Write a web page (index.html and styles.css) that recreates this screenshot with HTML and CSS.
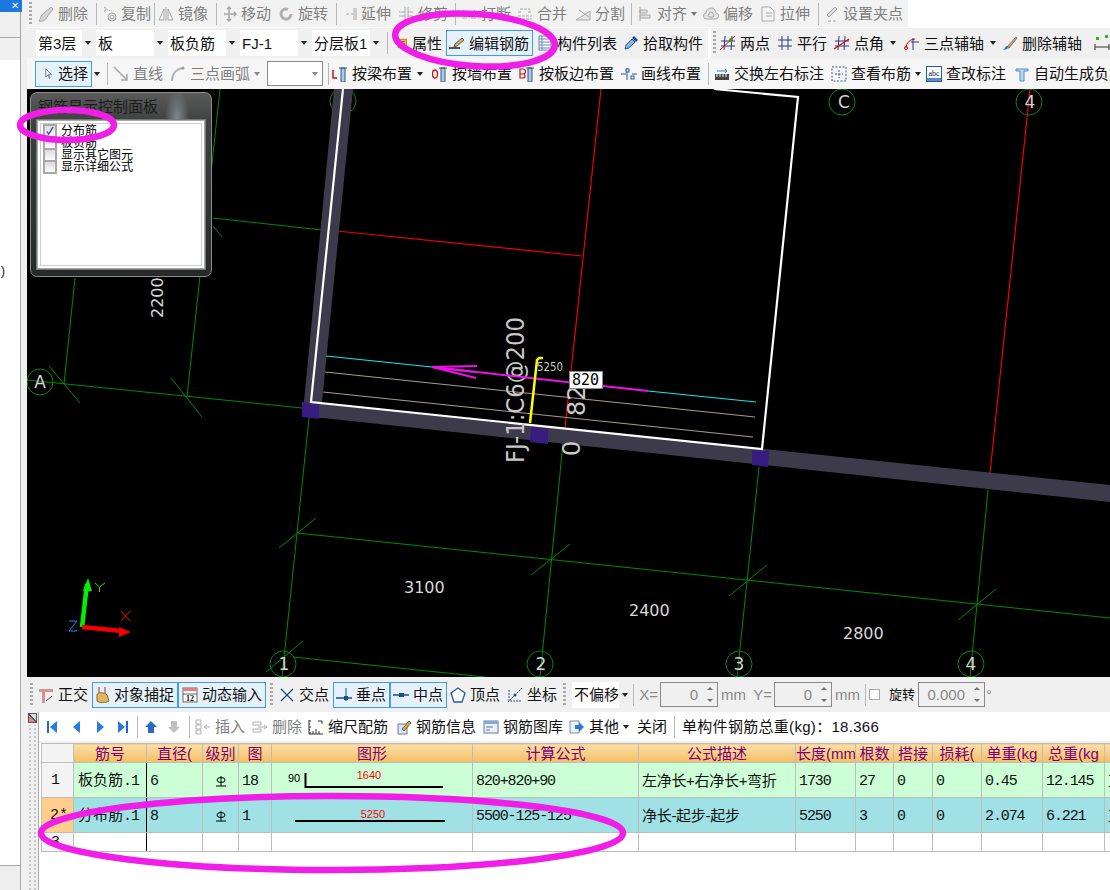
FILE: index.html
```html
<!DOCTYPE html>
<html lang="zh">
<head>
<meta charset="utf-8">
<title>钢筋编辑</title>
<link rel="stylesheet" href="styles.css">
</head>
<body>
<svg class="sprite" xmlns="http://www.w3.org/2000/svg">
<defs>
<symbol id="i-del" viewBox="0 0 16 16"><path d="M1 15c4 1 7-1 8-4l6-8-2-2-7 6c-3 1-3 5-5 8z" fill="#d4d4d4" stroke="#a8a8a8"/></symbol>
<symbol id="i-copy" viewBox="0 0 16 16"><g fill="none" stroke="#a8a8a8"><circle cx="3" cy="3" r="2"/><circle cx="11" cy="11" r="4"/><circle cx="11" cy="11" r="2"/><path d="M6 4l5 1" stroke-dasharray="1 1"/></g></symbol>
<symbol id="i-mirror" viewBox="0 0 16 16"><g fill="none" stroke="#a8a8a8"><path d="M1 14L6 3v11zM15 14L10 3v11zM8 1v14"/></g></symbol>
<symbol id="i-move" viewBox="0 0 16 16"><path d="M8 1v14M1 8h14M6 3l2-2 2 2M6 13l2 2 2-2M3 6L1 8l2 2M13 6l2 2-2 2" fill="none" stroke="#a8a8a8" stroke-width="1.5"/></symbol>
<symbol id="i-rot" viewBox="0 0 16 16"><path d="M13 8a5 5 0 1 1-3-4.600" fill="none" stroke="#b0b0b0" stroke-width="3"/></symbol>
<symbol id="i-ext" viewBox="0 0 16 16"><path d="M0 8h3M5 8h3M10 8h2M13 2v12M15 2v12M0 6v4" fill="none" stroke="#a8a8a8"/></symbol>
<symbol id="i-trim" viewBox="0 0 16 16"><path d="M1 6h6M1 10h6M10 6h5M10 10h5M7 1v14M10 1v14" fill="none" stroke="#a8a8a8"/></symbol>
<symbol id="i-brk" viewBox="0 0 16 16"><path d="M1 6h5M3 4L1 6l2 2M15 6h-5M13 4l2 2-2 2M1 12h5M10 12h5" fill="none" stroke="#a8a8a8"/></symbol>
<symbol id="i-merge" viewBox="0 0 16 16"><path d="M3 3h10M1 6h4M11 6h4M1 10h14M1 13h14" fill="none" stroke="#a8a8a8" stroke-dasharray="3 1"/></symbol>
<symbol id="i-split" viewBox="0 0 16 16"><path d="M1 14h14V5zM4 4l10 7" fill="#e4e4e4" stroke="#a8a8a8"/></symbol>
<symbol id="i-align" viewBox="0 0 16 16"><path d="M3 1v14M3 4h7v3H3zM3 9h10v3H3z" fill="#e0e0e0" stroke="#a8a8a8"/></symbol>
<symbol id="i-off" viewBox="0 0 16 16"><path d="M4 13a3 3 0 0 1-1-6 5 5 0 0 1 10 0 3 3 0 0 1-1 6zM6 11a2 2 0 0 1 0-3 2 2 0 0 1 4 0 2 2 0 0 1 0 3z" fill="#e4e4e4" stroke="#a8a8a8"/></symbol>
<symbol id="i-str" viewBox="0 0 16 16"><path d="M2 1h8l4 4v10H2zM6 7h6M6 10h6" fill="#f4f4f4" stroke="#a8a8a8"/></symbol>
<symbol id="i-set" viewBox="0 0 16 16"><path d="M6 11l8-8-2-2-8 8zM0 15h3M5 15h3M10 15h3" fill="#ddd" stroke="#a8a8a8"/></symbol>
<symbol id="i-prop" viewBox="0 0 16 16"><rect x="3" y="3" width="11" height="11" fill="#f0c040" stroke="#a07010"/><path d="M5 6h7M5 9h7" stroke="#6a4a08"/><rect x="6" y="11" width="7" height="2" fill="#4a8a3a"/></symbol>
<symbol id="i-edit" viewBox="0 0 16 16"><path d="M0 13h11" stroke="#222" stroke-width="1.500"/><path d="M5 12l1-3 7-6 2 2-7 6z" fill="#e8b060" stroke="#555"/></symbol>
<symbol id="i-list" viewBox="0 0 16 16"><path d="M2 1h12v14H2zM5 1v14M2 4h12M2 7h12M2 10h12M2 13h12" fill="#fff" stroke="#6a8ab8"/></symbol>
<symbol id="i-pick" viewBox="0 0 16 16"><path d="M2 14l1-4 6-6 3 3-6 6z" fill="#8ab4e8" stroke="#2a5a9a"/><path d="M9 3l2-2 4 4-2 2z" fill="#1a4a8a"/></symbol>
<symbol id="i-two" viewBox="0 0 16 16"><path d="M5 1L4 15M12 1l-1 14M1 6h14M1 11h14" stroke="#2a3a7a" fill="none"/><path d="M0 15L15 1" stroke="#d01010"/><circle cx="11" cy="5" r="2" fill="#4a8a2a"/></symbol>
<symbol id="i-par" viewBox="0 0 16 16"><path d="M5 1v14M11 1v14M1 5h14M1 11h14" stroke="#2a3a7a" fill="none"/></symbol>
<symbol id="i-ang" viewBox="0 0 16 16"><path d="M5 1L4 15M11 1l-1 14M1 6h14M1 11h14" stroke="#2a3a7a" fill="none"/><path d="M0 14L15 4" stroke="#d01010" stroke-width="1.300"/></symbol>
<symbol id="i-arc" viewBox="0 0 16 16"><path d="M2 13a9 9 0 0 1 9-9" stroke="#d01010" fill="none"/><path d="M9 3v12M7 7h8" stroke="#2a3a7a" fill="none"/><circle cx="2" cy="13" r="1.500" fill="none" stroke="#d01010"/></symbol>
<symbol id="i-dela" viewBox="0 0 16 16"><path d="M5 12l9-10 1 1-8 10z" fill="#e8a040" stroke="#777"/><path d="M1 15c2 0 5-1 6-3l-2-1c-2 0-2 3-4 4z" fill="#4a6ab8"/></symbol>
<symbol id="i-dim" viewBox="0 0 16 16"><rect x="2" y="2" width="3" height="3" fill="#3aa83a"/><rect x="11" y="0" width="3" height="3" fill="#3aa83a"/><path d="M1 9v6M15 9v6M1 12h14" stroke="#333" fill="none"/></symbol>
<symbol id="i-cur" viewBox="0 0 16 16"><path d="M5 1v11l3-3 2 5 1-1-2-4h4z" fill="#e8f0fa" stroke="#667"/></symbol>
<symbol id="i-line" viewBox="0 0 16 16"><path d="M1 1l13 13M14 8v6H8" fill="none" stroke="#a8a8a8" stroke-width="1.500"/></symbol>
<symbol id="i-gar" viewBox="0 0 16 16"><path d="M2 15C2 8 6 3 13 2" fill="none" stroke="#b4b4b4" stroke-width="2"/><circle cx="13" cy="2" r="1.500" fill="#999"/></symbol>
<symbol id="i-lb" viewBox="0 0 16 16"><path d="M1 4v8h4" fill="none" stroke="#c01818" stroke-width="1.500"/><path d="M7 2h8M9 2h4v14H9z" fill="#a8c8e8" stroke="#3a5a80"/></symbol>
<symbol id="i-qb" viewBox="0 0 16 16"><ellipse cx="3" cy="8" rx="2.500" ry="4" fill="none" stroke="#c01818" stroke-width="1.300"/><path d="M7 2h8M9 2h4v14H9z" fill="#a8c8e8" stroke="#3a5a80"/></symbol>
<symbol id="i-bb" viewBox="0 0 16 16"><path d="M1 3h3a2 2 0 0 1 0 5H1zM1 8h3a2 2 0 0 1 0 4H1z" fill="none" stroke="#c01818" stroke-width="1.200"/><path d="M7 2h8M9 2h4v14H9z" fill="#a8c8e8" stroke="#3a5a80"/></symbol>
<symbol id="i-dl" viewBox="0 0 16 16"><path d="M0 8h5M11 8h5M6 2v12" stroke="#2a5a9a" fill="none"/><rect x="5" y="3" width="3" height="3" fill="#fff" stroke="#2a5a9a"/><rect x="10" y="10" width="3" height="3" fill="#fff" stroke="#2a5a9a"/></symbol>
<symbol id="i-sw" viewBox="0 0 16 16"><rect x="1" y="8" width="14" height="6" fill="#444"/><path d="M3 8v3M6 8v3M9 8v3M12 8v3" stroke="#fff"/><path d="M3 5h10M11 3l2 2-2 2" fill="none" stroke="#3a7ac8"/></symbol>
<symbol id="i-view" viewBox="0 0 16 16"><path d="M1 1h14v14H1zM8 4v8M4 8h8" fill="none" stroke="#3a5a90" stroke-dasharray="2 1.500"/></symbol>
<symbol id="i-abc" viewBox="0 0 16 16"><rect x=".5" y=".5" width="15" height="15" fill="#fff" stroke="#2a5aa8"/><rect x="1" y="12" width="14" height="3" fill="#5a8ac8"/><text x="8" y="10" class="i-abc-t">abc</text></symbol>
<symbol id="i-t" viewBox="0 0 16 16"><path d="M2 3h12v2h-4v10H6V5H2z" fill="#b4d8f4" stroke="#5a8ab8"/></symbol>
<symbol id="i-ortho" viewBox="0 0 16 16"><path d="M1 2h14v3H1zM4 5h3v11H4z" fill="#d89090"/><path d="M8 14l6-5" stroke="#555"/></symbol>
<symbol id="i-snap" viewBox="0 0 16 16"><path d="M3 8c0-3 8-3 10 0l2 6c-3 2-10 2-12 0z" fill="#e0b860" stroke="#8a6a20"/><path d="M5 0v6M11 0v6" stroke="#a03030"/></symbol>
<symbol id="i-dyn" viewBox="0 0 16 16"><rect x="1" y="1" width="14" height="14" fill="#fff" stroke="#666"/><rect x="1" y="1" width="14" height="3" fill="#e08080"/><path d="M1 7h14" stroke="#666"/><text x="8" y="14" class="i-dyn-t">12</text></symbol>
<symbol id="i-cross" viewBox="0 0 16 16"><path d="M2 2l12 12M14 2L2 14" stroke="#1a4a90" stroke-width="1.300"/></symbol>
<symbol id="i-perp" viewBox="0 0 16 16"><path d="M0 11h16" stroke="#1a4a90" stroke-width="1.500"/><path d="M10 1v13" stroke="#1a4a90"/><rect x="8" y="9" width="4" height="4" fill="#1a4a90"/></symbol>
<symbol id="i-mid" viewBox="0 0 16 16"><path d="M0 8h16" stroke="#1a4a90" stroke-width="1.500"/><rect x="6" y="6" width="5" height="4" fill="#1a4a90"/></symbol>
<symbol id="i-pent" viewBox="0 0 16 16"><path d="M8 1l7 5-3 9H4L1 6z" fill="#fff" stroke="#2a5a9a" stroke-width="1.300"/></symbol>
<symbol id="i-coord" viewBox="0 0 16 16"><path d="M1 15L15 1M2 3v11h12" fill="none" stroke="#2a5a9a" stroke-dasharray="2 1"/><circle cx="8" cy="8" r="1.500" fill="#1a4a90"/></symbol>
<symbol id="i-first" viewBox="0 0 16 16"><rect x="3" y="2" width="2" height="12" fill="#1a6ad0"/><path d="M13 2v12L6 8z" fill="#2a7ae0"/></symbol>
<symbol id="i-prev" viewBox="0 0 16 16"><path d="M12 2v12L5 8z" fill="#2a7ae0"/></symbol>
<symbol id="i-next" viewBox="0 0 16 16"><path d="M5 2v12l7-6z" fill="#2a7ae0"/></symbol>
<symbol id="i-last" viewBox="0 0 16 16"><path d="M3 2v12l7-6z" fill="#2a7ae0"/><rect x="11" y="2" width="2" height="12" fill="#1a6ad0"/></symbol>
<symbol id="i-up" viewBox="0 0 16 16"><path d="M8 2l6 6h-3v6H5V8H2z" fill="#2a6ac0"/></symbol>
<symbol id="i-down" viewBox="0 0 16 16"><path d="M8 14l6-6h-3V2H5v6H2z" fill="#c0c0c0"/></symbol>
<symbol id="i-ins" viewBox="0 0 16 16"><path d="M1 1h5v4H1zM1 6h5v4H1zM1 11h5v4H1zM9 8h6M9 8l3-2M9 8l3 2" fill="none" stroke="#b0b0b0"/></symbol>
<symbol id="i-rem" viewBox="0 0 16 16"><path d="M1 3h8v3H1zM1 10h8v3H1zM6 8h9M15 8l-3-2M15 8l-3 2" fill="none" stroke="#b0b0b0"/></symbol>
<symbol id="i-scale" viewBox="0 0 16 16"><path d="M1 2h2M1 5h1M1 8h2M1 11h1M1 14h2M1 1v14M1 15h14M5 15v-3M8 15v-5M11 15v-3M14 2l-4 0M14 2v3" fill="none" stroke="#333"/></symbol>
<symbol id="i-info" viewBox="0 0 16 16"><path d="M2 5h9v10H2z" fill="#d8e4f4" stroke="#6a7a9a"/><path d="M6 10l7-8 2 2-7 8z" fill="#e8a040" stroke="#666"/></symbol>
<symbol id="i-lib" viewBox="0 0 16 16"><rect x="1" y="2" width="14" height="12" fill="#eaf0f8" stroke="#5a7aa8"/><rect x="1" y="2" width="14" height="3" fill="#8aa8d0"/><path d="M3 8h7M3 11h4" stroke="#5a7aa8"/></symbol>
<symbol id="i-oth" viewBox="0 0 16 16"><path d="M1 2h9v12H1z" fill="#eef2f8" stroke="#7a8aa8"/><path d="M6 6h4V3l5 5-5 5v-3H6z" fill="#2a7ad0"/></symbol>
</defs>
</svg>

<div class="page">
  <aside class="side">
    <div class="winclose">✕</div>
    <div class="tab"></div>
    <div class="tab tab-last"></div>
    <div class="sidelist">)</div>
    <div class="sidefoot"></div>
  </aside>

  <main class="main">
    <div class="bar1-wrap">
      <div class="bar bar1">
        <span class="grip"></span>
        <div class="tool off"><svg class="i"><use href="#i-del"/></svg>删除</div><span class="sep"></span>
        <div class="tool off"><svg class="i"><use href="#i-copy"/></svg>复制</div><span class="sep"></span>
        <div class="tool off"><svg class="i"><use href="#i-mirror"/></svg>镜像</div><span class="sep"></span>
        <div class="tool off"><svg class="i"><use href="#i-move"/></svg>移动</div>
        <div class="tool off"><svg class="i"><use href="#i-rot"/></svg>旋转</div><span class="sep"></span>
        <div class="tool off"><svg class="i"><use href="#i-ext"/></svg>延伸</div>
        <div class="tool off"><svg class="i"><use href="#i-trim"/></svg>修剪</div><span class="sep"></span>
        <div class="tool off"><svg class="i"><use href="#i-brk"/></svg>打断</div>
        <div class="tool off"><svg class="i"><use href="#i-merge"/></svg>合并</div>
        <div class="tool off"><svg class="i"><use href="#i-split"/></svg>分割</div><span class="sep"></span>
        <div class="tool off"><svg class="i"><use href="#i-align"/></svg>对齐<b class="drop drop-near"></b></div>
        <div class="tool off"><svg class="i"><use href="#i-off"/></svg>偏移</div>
        <div class="tool off"><svg class="i"><use href="#i-str"/></svg>拉伸</div><span class="sep"></span>
        <div class="tool off"><svg class="i"><use href="#i-set"/></svg>设置夹点</div>
      </div>
    </div>

    <div class="bar bar2">
      <div class="combo">第3层<b class="btn"></b></div>
      <div class="combo">板<b class="btn"></b></div>
      <div class="combo">板负筋<b class="btn"></b></div>
      <div class="combo">FJ-1<b class="btn"></b></div>
      <div class="combo">分层板1<b class="btn"></b></div>
      <span class="sep"></span>
      <div class="tool"><svg class="i i-narrow"><use href="#i-prop"/></svg>属性</div>
      <div class="tool on on-l"><svg class="i"><use href="#i-edit"/></svg>编辑钢筋</div>
      <div class="tool"><svg class="i"><use href="#i-list"/></svg>构件列表</div>
      <div class="tool"><svg class="i"><use href="#i-pick"/></svg>拾取构件</div>
      <span class="fill"></span>
      <span class="break"></span>
      <span class="grip"></span>
      <div class="tool"><svg class="i"><use href="#i-two"/></svg>两点</div>
      <div class="tool"><svg class="i"><use href="#i-par"/></svg>平行</div>
      <div class="tool"><svg class="i"><use href="#i-ang"/></svg>点角<b class="drop"></b></div>
      <div class="tool"><svg class="i"><use href="#i-arc"/></svg>三点辅轴<b class="drop"></b></div>
      <div class="tool"><svg class="i"><use href="#i-dela"/></svg>删除辅轴</div>
      <div class="tool"><svg class="i"><use href="#i-dim"/></svg></div>
    </div>

    <div class="bar bar3">
      <div class="tool on sel"><svg class="i i-narrow"><use href="#i-cur"/></svg>选择</div>
      <b class="drop drop-cell"></b>
      <span class="sep"></span>
      <div class="tool off"><svg class="i"><use href="#i-line"/></svg>直线</div>
      <div class="tool off"><svg class="i"><use href="#i-gar"/></svg>三点画弧</div>
      <b class="drop drop-cell drop-off"></b>
      <div class="combo3"><b class="drop drop-off"></b></div>
      <span class="sep"></span>
      <div class="tool"><svg class="i"><use href="#i-lb"/></svg>按梁布置</div>
      <b class="drop drop-cell"></b>
      <div class="tool"><svg class="i"><use href="#i-qb"/></svg>按墙布置</div>
      <div class="tool"><svg class="i"><use href="#i-bb"/></svg>按板边布置</div>
      <div class="tool"><svg class="i"><use href="#i-dl"/></svg>画线布置</div>
      <span class="sep"></span>
      <div class="tool"><svg class="i"><use href="#i-sw"/></svg>交换左右标注</div>
      <div class="tool"><svg class="i"><use href="#i-view"/></svg>查看布筋<b class="drop drop-near"></b></div>
      <div class="tool"><svg class="i"><use href="#i-abc"/></svg>查改标注</div>
      <div class="tool tool-start"><svg class="i"><use href="#i-t"/></svg>自动生成负筋</div>
    </div>

    <div class="canvas">
      <svg class="cad" viewBox="27 89 1083 588" xmlns="http://www.w3.org/2000/svg">
        <g class="gl">
          <line x1="220" y1="89" x2="187" y2="397"/>
          <line x1="75" y1="278" x2="64" y2="384"/>
          <line x1="27" y1="380" x2="302" y2="408"/>
          <line x1="49" y1="366" x2="80" y2="403"/>
          <line x1="171" y1="378" x2="202" y2="417"/>
          <line x1="213" y1="218" x2="322" y2="230"/>
          <line x1="213" y1="226" x2="222" y2="237"/>
          <line x1="309" y1="418" x2="282" y2="677"/>
          <line x1="563" y1="443" x2="540" y2="677"/>
          <line x1="759" y1="467" x2="737" y2="677"/>
          <line x1="988" y1="490" x2="970" y2="677"/>
          <line x1="297" y1="533" x2="1110" y2="618"/>
          <line x1="279" y1="548" x2="316" y2="518"/>
          <line x1="531" y1="575" x2="570" y2="544"/>
          <line x1="729" y1="596" x2="767" y2="565"/>
          <line x1="958" y1="620" x2="996" y2="589"/>
          <line x1="293" y1="657" x2="485" y2="677"/>
          <line x1="266" y1="672" x2="303" y2="641"/>
        </g>
        <g class="rl">
          <line x1="337" y1="231" x2="582" y2="256"/>
          <line x1="601" y1="89" x2="565" y2="428"/>
          <line x1="1030" y1="89" x2="990" y2="473"/>
        </g>
        <g class="ax">
          <circle cx="40" cy="382" r="13"/>
          <circle cx="343" cy="101" r="13"/>
          <circle cx="842" cy="102" r="13"/>
          <circle cx="1029" cy="102" r="13"/>
          <circle cx="283" cy="664" r="13"/>
          <circle cx="540" cy="664" r="13"/>
          <circle cx="739" cy="664" r="13"/>
          <circle cx="971" cy="664" r="13"/>
        </g>
        <polygon class="beam" points="334,89 353,89 322,402 304,402"/>
        <polygon class="beam" points="304,401 1110,485 1110,502 304,416"/>
        <polygon class="col" points="302,402 319,404 319,419 302,417"/>
        <polygon class="col" points="531,427 548,429 548,444 530,442"/>
        <polygon class="col" points="752,450 769,451 768,467 752,465"/>
        <polyline class="slab" points="714,89 798,97 762,449 311,402 343,89"/>
        <g class="tan">
          <line x1="325" y1="372" x2="755" y2="417"/>
          <line x1="323" y1="392" x2="753" y2="437"/>
        </g>
        <text class="t-big" transform="translate(524 463) rotate(-90)" textLength="146" lengthAdjust="spacingAndGlyphs">FJ-1:C6@200</text>
        <text class="t-big" transform="translate(585 416) rotate(-90)">82</text>
        <text class="t-big" transform="translate(580 456) rotate(-90)">0</text>
        <g class="cy">
          <line x1="326" y1="356" x2="432" y2="367"/>
          <line x1="648" y1="391" x2="756" y2="402"/>
        </g>
        <g class="mg">
          <line x1="432" y1="367" x2="648" y2="391"/>
          <line x1="432" y1="367" x2="477" y2="366"/>
          <line x1="432" y1="367" x2="476" y2="378"/>
          <line x1="432" y1="367" x2="475" y2="372"/>
        </g>
        <polyline class="yl" points="530,423 537,360 539,358 543,358"/>
        <text class="t-sm" x="537" y="371" textLength="26" lengthAdjust="spacingAndGlyphs">5250</text>
        <rect class="tipbox" x="569.500" y="371.500" width="33" height="17"/>
        <text class="t-tip" x="572" y="385">820</text>
        <text class="t-mid" transform="translate(163 318) rotate(-90)">2200</text>
        <text class="t-mid" x="404" y="593">3100</text>
        <text class="t-mid" x="629" y="616">2400</text>
        <text class="t-mid" x="843" y="639">2800</text>
        <g class="t-ax">
          <text x="40" y="388">A</text>
          <text x="844" y="108">C</text>
          <text x="1030" y="108">4</text>
          <text x="284" y="670">1</text>
          <text x="541" y="670">2</text>
          <text x="739" y="670">3</text>
          <text x="971" y="670">4</text>
        </g>
        <g class="gz">
          <path class="gz-y" d="M82 627L87 584"/>
          <path class="gz-yh" d="M88 578L92 591H83z"/>
          <path class="gz-x" d="M82 627L122 631"/>
          <path class="gz-xh" d="M131 632L119 627V637z"/>
          <circle class="gz-o" cx="82" cy="627" r="4"/>
          <path class="gz-yl" d="M95 583L99.500 587L105 583M99.500 587V592"/>
          <path class="gz-xl" d="M121 611L130 621M130 611L121 621"/>
          <path class="gz-zl" d="M69 621H77L69 631H77"/>
        </g>
      </svg>

      <section class="panel">
        <h2 class="panel-title">钢筋显示控制面板</h2>
        <div class="panel-body">
          <label class="chk"><span class="box"><svg class="tick" viewBox="0 0 11 11"><path d="M2 6l2 3 5-8"/></svg></span>分布筋</label>
          <label class="chk"><span class="box"></span>板负筋</label>
          <label class="chk"><span class="box"></span>显示其它图元</label>
          <label class="chk"><span class="box"></span>显示详细公式</label>
        </div>
      </section>
    </div>

    <div class="bar status">
      <span class="grip"></span>
      <div class="tool"><svg class="i"><use href="#i-ortho"/></svg>正交</div>
      <div class="tool on on-l"><svg class="i"><use href="#i-snap"/></svg>对象捕捉</div>
      <div class="tool on"><svg class="i"><use href="#i-dyn"/></svg>动态输入</div>
      <span class="grip grip-c"></span>
      <div class="tool"><svg class="i"><use href="#i-cross"/></svg>交点</div>
      <div class="tool on on-l"><svg class="i"><use href="#i-perp"/></svg>垂点</div>
      <div class="tool on"><svg class="i"><use href="#i-mid"/></svg>中点</div>
      <div class="tool"><svg class="i"><use href="#i-pent"/></svg>顶点</div>
      <div class="tool"><svg class="i"><use href="#i-coord"/></svg>坐标</div>
      <span class="grip grip-c"></span>
      <div class="combo combo-s">不偏移<b class="btn"></b></div>
      <span class="sep"></span>
      <span class="lbl">X=</span>
      <div class="spin"><span>0</span><i class="sp"><b></b><b class="dn"></b></i></div>
      <span class="lbl lbl-l">mm</span>
      <span class="lbl">Y=</span>
      <div class="spin"><span>0</span><i class="sp"><b></b><b class="dn"></b></i></div>
      <span class="lbl lbl-l">mm</span>
      <span class="sep"></span>
      <span class="square"></span>
      <span class="rot">旋转</span>
      <div class="spin spin-r"><span>0.000</span><i class="sp"><b></b><b class="dn"></b></i></div>
      <span class="lbl lbl-l">°</span>
    </div>

    <div class="dock">
      <div class="dock-grip"><span class="dock-x"></span></div>
      <div class="dock-main">
        <div class="bar dockbar">
          <div class="nav"><svg class="i"><use href="#i-first"/></svg></div>
          <div class="nav"><svg class="i"><use href="#i-prev"/></svg></div>
          <div class="nav"><svg class="i"><use href="#i-next"/></svg></div>
          <div class="nav"><svg class="i"><use href="#i-last"/></svg></div>
          <span class="sep"></span>
          <div class="nav"><svg class="i"><use href="#i-up"/></svg></div>
          <div class="nav"><svg class="i"><use href="#i-down"/></svg></div>
          <span class="sep"></span>
          <div class="tool off"><svg class="i"><use href="#i-ins"/></svg>插入</div>
          <div class="tool off"><svg class="i"><use href="#i-rem"/></svg>删除</div>
          <div class="tool"><svg class="i"><use href="#i-scale"/></svg>缩尺配筋</div>
          <div class="tool"><svg class="i"><use href="#i-info"/></svg>钢筋信息</div>
          <div class="tool"><svg class="i"><use href="#i-lib"/></svg>钢筋图库</div>
          <div class="tool"><svg class="i"><use href="#i-oth"/></svg>其他<b class="drop drop-near"></b></div>
          <div class="tool">关闭</div>
          <span class="sep"></span>
          <div class="total">单构件钢筋总重(kg)：18.366</div>
        </div>
        <div class="tablewrap">
          <table class="grid">
            <colgroup>
              <col class="c32"><col class="c73"><col class="c56"><col class="c36"><col class="c33"><col class="c201"><col class="c166"><col class="c157"><col class="c60"><col class="c38"><col class="c39"><col class="c49"><col class="c61"><col class="c62"><col class="c30">
            </colgroup>
            <thead>
              <tr>
                <th class="corner"></th><th>筋号</th><th>直径(</th><th>级别</th><th>图</th><th>图形</th><th>计算公式</th><th>公式描述</th><th>长度(mm</th><th>根数</th><th>搭接</th><th>损耗(</th><th>单重(kg</th><th>总重(kg</th><th></th>
              </tr>
            </thead>
            <tbody>
              <tr class="r1">
                <td class="rh">1</td>
                <td class="k">板负筋<span class="m">.1</span></td>
                <td><span class="m">6</span></td>
                <td class="gr"><svg class="grade" viewBox="0 0 10 11"><ellipse cx="5" cy="4" rx="4" ry="2.500"/><path d="M5 0v10M0 10h10"/></svg></td>
                <td><span class="m">18</span></td>
                <td class="sh"><svg class="shape" viewBox="0 0 200 34"><text class="s-b" x="16" y="19">90</text><text class="s-r" x="97" y="16" text-anchor="middle">1640</text><path class="s-l" d="M33.500 10V24H171"/></svg></td>
                <td><span class="m">820+820+90</span></td>
                <td class="d">左净长+右净长+弯折</td>
                <td><span class="m">1730</span></td>
                <td><span class="m">27</span></td>
                <td><span class="m">0</span></td>
                <td><span class="m">0</span></td>
                <td><span class="m">0.45</span></td>
                <td><span class="m">12.145</span></td>
                <td>直筋</td>
              </tr>
              <tr class="r2">
                <td class="rh">2*</td>
                <td class="k">分布筋<span class="m">.1</span></td>
                <td><span class="m">8</span></td>
                <td class="gr"><svg class="grade" viewBox="0 0 10 11"><ellipse cx="5" cy="4" rx="4" ry="2.500"/><path d="M5 0v10M0 10h10"/></svg></td>
                <td><span class="m">1</span></td>
                <td class="sh"><svg class="shape" viewBox="0 0 200 34"><text class="s-r" x="101" y="20" text-anchor="middle">5250</text><path class="s-l" d="M23 23H173"/></svg></td>
                <td><span class="m">5500-125-125</span></td>
                <td class="d">净长-起步-起步</td>
                <td><span class="m">5250</span></td>
                <td><span class="m">3</span></td>
                <td><span class="m">0</span></td>
                <td><span class="m">0</span></td>
                <td><span class="m">2.074</span></td>
                <td><span class="m">6.221</span></td>
                <td>直筋</td>
              </tr>
              <tr class="r3">
                <td class="rh">3</td><td class="k"></td><td></td><td></td><td></td><td></td><td></td><td></td><td></td><td></td><td></td><td></td><td></td><td></td><td></td>
              </tr>
            </tbody>
          </table>
        </div>
      </div>
    </div>
  </main>
</div>

<svg class="marks" viewBox="0 0 1110 890" xmlns="http://www.w3.org/2000/svg">
  <ellipse cx="475" cy="40" rx="80" ry="26" transform="rotate(4 475 40)"/>
  <ellipse cx="67" cy="125" rx="47" ry="15"/>
  <ellipse cx="332" cy="833" rx="291" ry="37"/>
</svg>
</body>
</html>
```
FILE: styles.css
```css
* { box-sizing: border-box; }
html, body { margin: 0; padding: 0; }
body {
  width: 1110px;
  height: 890px;
  overflow: hidden;
  position: relative;
  background: #fff;
  color: #111;
  font: 15px/1 "Liberation Sans", "Noto Sans CJK SC", sans-serif;
}
.sprite { position: absolute; width: 0; height: 0; }
.page { display: flex; width: 1110px; height: 890px; }

/* left strip */
.side { width: 27px; flex: none; display: flex; flex-direction: column; background: linear-gradient(90deg, #fff 0 20px, #a8a8a8 20px 21px, #f0f0f0 21px); }
.winclose { width: 22px; height: 12px; background: #1a78e0; color: #fff; font-size: 10px; line-height: 12px; text-align: right; padding-right: 3px; }
.tab { width: 21px; height: 26px; background: #f0f0f0; border-bottom: 1px solid #a8a8a8; border-right: 1px solid #a8a8a8; }
.tab-last { height: 22px; border-bottom: 0; }
.sidelist { width: 21px; flex: 1; background: #fff; border-right: 1px solid #a8a8a8; font-size: 12px; padding-top: 205px; padding-left: 1px; }
.sidefoot { width: 21px; height: 25px; background: #eee; border-top: 1px solid #a8a8a8; border-right: 1px solid #a8a8a8; }

.main { width: 1083px; flex: none; display: flex; flex-direction: column; }

/* toolbars */
.bar { display: grid; align-items: center; white-space: nowrap; overflow: hidden; }
.bar1-wrap { height: 28px; padding-bottom: 1px; }
.bar1 {
  width: 881px; height: 27px; background: #f2f2f2;
  grid-template-columns: 9px 52px 16px 47px 6px 51px 16px 47px 57px 16px 47px 57px 14px 49px 56px 58px 12px 61px 55px 57px 16px 77px;
}
.bar2 {
  height: 30px; background: linear-gradient(90deg, #f0f0f0 0 681px, #fff 681px 684px, #f0f0f0 684px);
  padding-left: 9px;
  grid-template-columns: 60px 72px 72px 72px 72px 7px 51px 91px 84px 86px 5px 3px 6px 53px 57px 70px 100px 85px 28px;
}
.bar3 {
  height: 31px; background: #f6f6f6;
  padding-left: 8px;
  grid-template-columns: 57px 10px 10px 51px 87px 14px 61px 6px 81px 16px 84px 102px 87px 14px 109px 98px 84px 104px;
}
.status {
  height: 35px; background: #f0f0f0;
  grid-template-columns: 9px 52px 90px 88px 11px 52px 61px 57px 53px 57px 15px 57px 8px 21px 62px 26px 26px 62px 28px 7px 20px 29px 67px 10px;
}
.dockbar {
  height: 29px; background: #fff; margin-left: 1px;
  grid-template-columns: 23px 26px 22px 23px 6px 21px 25px 6px 53px 57px 86px 88px 87px 67px 37px 14px 300px;
}

.tool { display: flex; align-items: center; justify-content: flex-end; gap: 4px; height: 26px; color: #111; min-width: 0; overflow: hidden; }
.tool.off { color: #7f7f7f; }
.tool-start { justify-content: flex-start; padding-left: 8px; }
.on { background: #e6f2fb; border: 1px solid #3f9cf0; padding-right: 3px; }
.on-l { margin-left: 4px; }
.sel { justify-content: flex-end; height: 26px; padding-right: 3px; }
.i { width: 16px; height: 16px; flex: none; }
.i-narrow { width: 12px; }
.i-abc-t { font: 8px "Liberation Serif", serif; fill: #123; text-anchor: middle; }
.i-dyn-t { font: bold 8px "Liberation Serif", serif; fill: #111; text-anchor: middle; }

.sep { width: 1px; height: 22px; background: #b8b8b8; justify-self: center; }
.grip { justify-self: center; width: 3px; height: 24px; background: repeating-linear-gradient(#a8a8a8 0 2px, transparent 2px 4px); }
.bar1 .grip { justify-self: start; margin-left: 2px; }
.status .grip { justify-self: start; margin-left: 3px; }
.status .grip-c { justify-self: center; margin-left: 0; }
.fill { height: 30px; }
.break { height: 30px; }

.drop { flex: none; width: 0; height: 0; margin-left: 2px; margin-right: 1px; border: 3px solid transparent; border-top: 4px solid #222; border-bottom: 0; }
.drop-near { margin-left: 0; }
.drop-cell { justify-self: center; margin: 0; }
.drop-off { border-top-color: #888; }
.tool.off .drop { border-top-color: #777; }

.combo { display: flex; align-items: center; justify-content: space-between; width: 69px; height: 26px; background: #fff; padding-left: 2px; overflow: hidden; }
.bar2 .combo:first-child { width: 57px; }
.combo .btn { display: flex; align-items: center; justify-content: center; width: 11px; height: 26px; background: #f0f0f0; flex: none; }
.combo .btn::after { content: ""; border: 3px solid transparent; border-top: 4px solid #222; border-bottom: 0; }
.combo-s { width: 57px; padding-left: 2px; }
.combo3 { display: flex; align-items: center; justify-content: flex-end; width: 56px; height: 25px; margin-left: 3px; border: 1px solid #8a8a8a; background: #fff; padding-right: 3px; }

.lbl { color: #8a8a8a; font-size: 15px; text-align: right; }
.lbl-l { text-align: left; padding-left: 1px; }
.spin { display: flex; align-items: center; justify-content: flex-end; height: 25px; margin: 0 2px; border: 1px solid #8a8a8a; background: #f0f0f0; color: #8a8a8a; font-size: 15px; }
.spin-r { margin: 0; }
.sp { display: flex; flex-direction: column; justify-content: space-between; height: 15px; width: 14px; margin-left: 5px; align-items: center; }
.sp b { width: 0; height: 0; border: 3px solid transparent; border-bottom: 3px solid #777; border-top: 0; }
.sp .dn { border-top: 3px solid #777; border-bottom: 0; }
.square { width: 11px; height: 11px; border: 1px solid #aaa; background: #fff; }
.rot { font-size: 13px; text-align: left; }

/* drawing */
.canvas { position: relative; height: 588px; background: #000; overflow: hidden; }
.cad { display: block; width: 1083px; height: 588px; }
.cad line, .cad polyline, .cad circle { fill: none; }
.gl line { stroke: #008a00; stroke-width: 1; }
.rl line { stroke: #f00000; stroke-width: 1.200; }
.ax circle { stroke: #0a820a; stroke-width: 1; }
.beam { fill: #3d3b4b; }
.col { fill: #381d80; }
.slab { fill: none; stroke: #fff; stroke-width: 2.200; }
.tan line { stroke: #ad9a92; stroke-width: 1; }
.cy line { stroke: #10e8f0; stroke-width: 1.200; }
.mg line { stroke: #ee10e8; stroke-width: 2; }
.yl { stroke: #ffff00; stroke-width: 2.500; }
.tipbox { fill: #fff; stroke: #8a8a8a; }
.t-big { font: 24px "DejaVu Sans", sans-serif; fill: #c8c8c8; }
.t-mid { font: 16px "DejaVu Sans", sans-serif; fill: #d8d8d8; }
.t-sm { font: 12px "DejaVu Sans", sans-serif; fill: #c8c8c8; }
.t-tip { font: 15px "DejaVu Sans Mono", monospace; fill: #000; }
.t-ax text { font: 17px "DejaVu Sans", sans-serif; fill: #d4d4d4; text-anchor: middle; }
.gz path { fill: none; }
.gz-y { stroke: #00f000; stroke-width: 4.500; }
.gz .gz-yh { fill: #00f000; }
.gz-x { stroke: #f00000; stroke-width: 4.500; }
.gz .gz-xh { fill: #f00000; }
.gz-o { fill: #0a84ff; }
.gz-yl { stroke: #20e020; }
.gz-xl { stroke: #e01010; }
.gz-zl { stroke: #1a8cff; }

/* floating panel */
.panel {
  position: absolute; left: 3px; top: 3px; width: 182px; height: 185px;
  border: 1px solid #8c8c8c; border-radius: 7px;
  background:
    radial-gradient(ellipse 12px 32px at 146px 26px, #7e8a92, transparent),
    linear-gradient(#5a5a5a, #3e4040 16%, #303434 60%, #262a2a);
  padding: 6px;
}
.panel-title { margin: 0 0 6px 1px; font-size: 15px; font-weight: normal; line-height: 15px; color: #1c1c1c; white-space: nowrap; height: 15px; letter-spacing: 0; }
.panel-body { height: 149px; background: #fff; border: 1px solid #aaa; outline: 1px solid #777; box-shadow: inset 0 0 0 2px #fff, inset 0 0 0 3px #ccc; padding: 4px 5px; }
.chk { display: flex; align-items: center; gap: 4px; height: 12px; font-size: 12px; line-height: 12px; color: #000; white-space: nowrap; }
.box { flex: none; width: 14px; height: 14px; border: 2px solid #a8a8a8; background: linear-gradient(#dcdcdc, #fbfbfb); position: relative; z-index: 0; }
.tick { display: block; width: 10px; height: 10px; }
.tick path { fill: none; stroke: #3a5aa0; stroke-width: 1.600; }

/* dock */
.dock { flex: 1; display: flex; min-height: 0; background: #f0f0f0; }
.dock-grip {
  width: 12px; flex: none; padding: 1px 0 0 1px;
  background:
    linear-gradient(#f0f0f0 0 13px, transparent 13px),
    repeating-linear-gradient(90deg, #f0f0f0 0 2px, transparent 2px 4px, #f0f0f0 4px 5px),
    repeating-linear-gradient(#c8c8c8 0 2px, #f0f0f0 2px 4px);
  border-right: 1px solid #a8a8a8;
}
.dock-x { display: block; width: 9px; height: 10px; border: 1px solid #555; background: linear-gradient(45deg, #d88 0 45%, #555 45% 55%, #ddd 55%); }
.dock-main { flex: 1; min-width: 0; display: flex; flex-direction: column; background: #fff; }
.nav { display: flex; justify-content: center; }
.total { padding-left: 1px; letter-spacing: .3px; }
.tablewrap { flex: 1; overflow: hidden; padding: 2px 0 0 2px; background: linear-gradient(#f0f0f0 0 2px, #fff 2px); }

.grid { table-layout: fixed; width: 1093px; border-collapse: collapse; font-size: 15px; line-height: 1; }
.c32 { width: 32px; } .c73 { width: 73px; } .c56 { width: 56px; } .c36 { width: 36px; } .c33 { width: 33px; }
.c201 { width: 201px; } .c166 { width: 166px; } .c157 { width: 157px; } .c60 { width: 60px; } .c38 { width: 38px; }
.c39 { width: 39px; } .c49 { width: 49px; } .c61 { width: 61px; } .c62 { width: 62px; } .c30 { width: 30px; }
.grid th, .grid td { border: 1px solid #bdbdbd; padding: 0 0 0 3px; overflow: hidden; white-space: nowrap; font-weight: normal; text-align: left; }
.grid th { height: 19px; padding: 0; text-align: center; color: #7a007a; background: linear-gradient(#fbdfa8, #f4bf62); }
.grid th.corner { background: #f4f4f4; }
.grid .r1 td, .grid .r2 td { height: 35px; }
.grid .r3 td { height: 19px; }
.r1 td { background: #ccffd6; }
.r2 td { background: #9fe1e5; }
.r3 td { background: #fff; }
.grid .rh { padding-left: 9px; background: #f4f4f4; font-family: "Liberation Mono", monospace; }
.grid .r2 .rh { background: #ffcd8c; padding-left: 8px; }
.grid .k { border-right: 1px solid #000; padding-left: 4px; }
.m { font-family: "Liberation Mono", monospace; letter-spacing: -1.100px; }
.d { letter-spacing: -.3px; }
.grid .gr { padding: 0; text-align: center; }
.grade { display: inline-block; width: 10px; height: 11px; vertical-align: middle; }
.grade ellipse, .grade path { fill: none; stroke: #000; stroke-width: 1; }
.grid .sh { padding: 0; }
.shape { display: block; width: 200px; height: 34px; }
.s-b { font: 11px "Liberation Sans", sans-serif; fill: #000; }
.s-r { font: 11px "Liberation Sans", sans-serif; fill: #f00; }
.s-l { fill: none; stroke: #000; stroke-width: 2; }

/* hand-drawn highlight rings */
.marks { position: absolute; left: 0; top: 0; width: 1110px; height: 890px; pointer-events: none; }
.marks ellipse { fill: none; stroke: #f01ee6; stroke-width: 6.500; }
```
